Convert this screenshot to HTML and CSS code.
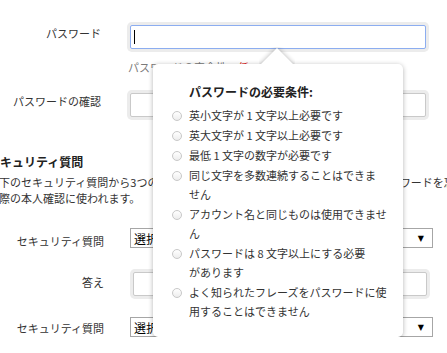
FILE: index.html
```html
<!DOCTYPE html>
<html lang="ja">
<head>
    <meta charset="UTF-8">
    <title>アカウント登録</title>
    <link rel="stylesheet" href="styles.css">
</head>
<body>
<div class="page">
    <div class="field">
        <label class="field-label" for="pw">パスワード</label>
        <div class="field-control">
            <input type="password" id="pw" class="text-input is-active">
        </div>
    </div>
    <p class="strength">パスワードの安全性：<span class="strength-low">低</span></p>

    <div class="field field-confirm">
        <label class="field-label" for="pw2">パスワードの確認</label>
        <div class="field-control">
            <input type="password" id="pw2" class="text-input">
        </div>
    </div>

    <h2 class="section-title">セキュリティ質問</h2>
    <p class="section-desc">以下のセキュリティ質問から3つの質問を選び答えを入力してください。答えはパスワードを忘れた時に<br>た際の本人確認に使われます。</p>

    <div class="field field-q">
        <label class="field-label">セキュリティ質問</label>
        <div class="select">
            <span>選択してください</span>
            <span class="select-arrow">▼</span>
        </div>
    </div>
    <div class="field field-a">
        <label class="field-label" for="a1">答え</label>
        <div class="field-control">
            <input type="text" id="a1" class="text-input answer-input">
        </div>
    </div>
    <div class="field field-q2">
        <label class="field-label">セキュリティ質問</label>
        <div class="select">
            <span>選択してください</span>
            <span class="select-arrow">▼</span>
        </div>
    </div>

    <!-- password rules popup -->
    <div class="rules">
        <div class="rules-arrow"><div class="rules-arrow-box"></div></div>
        <h3 class="rules-title">パスワードの必要条件:</h3>
        <ul class="rules-list">
            <li><span class="radio"></span><span>英小文字が 1 文字以上必要です</span></li>
            <li><span class="radio"></span><span>英大文字が 1 文字以上必要です</span></li>
            <li><span class="radio"></span><span>最低 1 文字の数字が必要です</span></li>
            <li><span class="radio"></span><span>同じ文字を多数連続することはできま<br>せん</span></li>
            <li><span class="radio"></span><span>アカウント名と同じものは使用できませ<br>ん</span></li>
            <li><span class="radio"></span><span>パスワードは 8 文字以上にする必要<br>があります</span></li>
            <li><span class="radio"></span><span>よく知られたフレーズをパスワードに使<br>用することはできません</span></li>
        </ul>
    </div>
</div>
</body>
</html>
```

FILE: styles.css
```css
body {
    margin: 0;
    background: #ffffff;
    color: #333333;
    font-family: "Noto Sans CJK JP", "Noto Sans", sans-serif;
    font-size: 11px;
    overflow: hidden;
}

.page {
    position: relative;
    width: 720px;
    margin-left: -12px;
    padding-top: 25px;
}

/* form rows */
.field {
    display: grid;
    grid-template-columns: 113px 296px;
    column-gap: 29px;
    align-items: start;
}

.field-label {
    text-align: right;
    line-height: 16px;
}

.field-control {
    display: flex;
}

.text-input {
    box-sizing: border-box;
    width: 296px;
    height: 24px;
    margin: 0;
    padding: 0 4px;
    border: 1px solid #c9c9c9;
    border-radius: 2px;
    background: #ffffff;
    box-shadow: 0 0 0 3px #ececec;
    font: inherit;
    outline: none;
}

/* focused field, with the text caret drawn in */
.text-input.is-active {
    border-color: #8cadf0;
    background: linear-gradient(#000000, #000000) no-repeat 3px 4px / 1px 14px, #ffffff;
}

.strength {
    margin: 10px 0 0 140px;
    line-height: 16px;
    color: #7a7a7a;
}

.strength-low {
    color: #e02020;
}

.field-confirm {
    margin-top: 18px;
}

.section-title {
    margin: 36px 0 0;
    font-size: 12px;
    line-height: 18px;
    font-weight: bold;
    color: #222222;
}

.section-desc {
    margin: 3px 0 0;
    line-height: 16px;
    white-space: nowrap;
}

.field-q,
.field-a,
.field-q2 {
    grid-template-columns: 116px 303px;
    column-gap: 26px;
}

.field-q {
    margin-top: 22px;
}

.field-q .field-label {
    padding-top: 5px;
}

.field-a {
    margin-top: 23px;
}

.field-a .field-label {
    padding-top: 2px;
}

.answer-input {
    width: 294px;
    margin-left: 3px;
}

.field-q2 {
    margin-top: 21px;
}

.field-q2 .field-label {
    padding-top: 3px;
}

.select {
    box-sizing: border-box;
    display: flex;
    justify-content: space-between;
    align-items: center;
    width: 303px;
    height: 20px;
    padding: 0 8px 0 3px;
    border: 1px solid #a6a6a6;
    background: #ffffff;
    color: #000000;
    font-size: 12px;
}

.select-arrow {
    font-family: "DejaVu Sans", sans-serif;
    font-size: 8px;
}

/* rules popup */
.rules {
    position: absolute;
    left: 165px;
    top: 64px;
    box-sizing: border-box;
    width: 250px;
    height: 273px;
    padding: 19px 10px 0 19px;
    background: #ffffff;
    border-radius: 5px;
    box-shadow: 0 1px 5px rgba(0, 0, 0, 0.3);
    z-index: 5;
}

.rules-arrow {
    position: absolute;
    left: 106px;
    top: -17px;
    width: 36px;
    height: 17px;
    overflow: hidden;
}

.rules-arrow-box {
    width: 24px;
    height: 24px;
    margin: 6px 0 0 6px;
    background: #ffffff;
    transform: rotate(45deg);
    box-shadow: 0 0 5px rgba(0, 0, 0, 0.3);
}

.rules-title {
    margin: 0 0 5px 17px;
    font-size: 12px;
    line-height: 18px;
    font-weight: bold;
    color: #222222;
}

.rules-list {
    margin: 0;
    padding: 0;
    list-style: none;
}

.rules-list li {
    display: grid;
    grid-template-columns: 17px 1fr;
    line-height: 19px;
    margin-bottom: 1px;
    white-space: nowrap;
}

.radio {
    box-sizing: border-box;
    width: 10px;
    height: 10px;
    margin-top: 5px;
    border: 1px solid #c8c8c8;
    border-radius: 50%;
    background: linear-gradient(#ffffff, #ededed);
}
```
